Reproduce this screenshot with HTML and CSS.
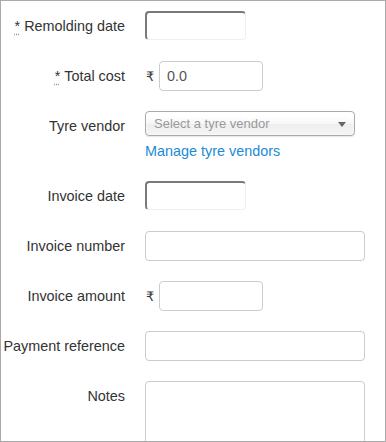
FILE: index.html
```html
<!DOCTYPE html>
<html lang="en">
<head>
  <meta charset="UTF-8">
  <meta name="viewport" content="width=device-width, initial-scale=1.0">
  <title>Tyre Remolding</title>
  <link rel="stylesheet" href="styles.css">
</head>
<body>

  <!-- Remolding form -->
  <form class="remold-form">

    <div class="form-row">
      <label class="form-label"><abbr title="required">*</abbr> Remolding date</label>
      <div class="form-field">
        <input type="text" class="date-input">
      </div>
    </div>

    <div class="form-row">
      <label class="form-label"><abbr title="required">*</abbr> Total cost</label>
      <div class="form-field money">
        <span class="currency">₹</span>
        <input type="text" class="text-input short" value="0.0">
      </div>
    </div>

    <div class="form-row">
      <label class="form-label">Tyre vendor</label>
      <div class="form-field stacked">
        <div class="select-box">
          <span class="placeholder">Select a tyre vendor</span>
          <span class="arrow"></span>
        </div>
        <a href="#" class="manage-link">Manage tyre vendors</a>
      </div>
    </div>

    <div class="form-row">
      <label class="form-label">Invoice date</label>
      <div class="form-field">
        <input type="text" class="date-input">
      </div>
    </div>

    <div class="form-row">
      <label class="form-label">Invoice number</label>
      <div class="form-field">
        <input type="text" class="text-input">
      </div>
    </div>

    <div class="form-row">
      <label class="form-label">Invoice amount</label>
      <div class="form-field money">
        <span class="currency">₹</span>
        <input type="text" class="text-input short">
      </div>
    </div>

    <div class="form-row">
      <label class="form-label">Payment reference</label>
      <div class="form-field">
        <input type="text" class="text-input">
      </div>
    </div>

    <div class="form-row last">
      <label class="form-label">Notes</label>
      <div class="form-field">
        <textarea class="notes"></textarea>
      </div>
    </div>

  </form>

</body>
</html>
```

FILE: styles.css
```css
/* General styling */
html {
  overflow: hidden;
}

body {
  margin: 0;
  height: 442px;
  box-sizing: border-box;
  border: 1px solid #aaa;
  overflow: hidden;
  background: #fff;
  font-family: "Liberation Sans", Arial, sans-serif;
  font-size: 14.4px;
  color: #333;
}

/* Form layout */
.remold-form {
  padding-top: 10px;
}

.form-row {
  display: flex;
  align-items: flex-start;
  margin-bottom: 20px;
}

.form-row.last {
  margin-bottom: 0;
}

.form-label {
  width: 124px;
  flex-shrink: 0;
  text-align: right;
  line-height: 30px;
  margin-right: 20px;
}

.form-label abbr {
  text-decoration: underline dotted;
  text-decoration-color: #999;
  text-underline-offset: 3px;
  cursor: help;
}

.form-field {
  display: flex;
  align-items: center;
}

.form-field.stacked {
  flex-direction: column;
  align-items: flex-start;
}

/* Inputs */
.text-input {
  width: 220px;
  height: 30px;
  box-sizing: border-box;
  border: 1px solid #ccc;
  border-radius: 4px;
  padding: 0 7px;
  font: inherit;
  color: #555;
  margin: 0;
}

.text-input.short {
  width: 104px;
}

.date-input {
  width: 101px;
  height: 29px;
  box-sizing: border-box;
  border-style: solid;
  border-width: 2px 1px 1px 2px;
  border-color: #7a7a7a #f0f0f0 #f0f0f0 #7a7a7a;
  border-radius: 4px;
  margin: 0;
  background: #fff;
}

.currency {
  width: 13px;
  padding-left: 1px;
  font-family: "DejaVu Sans", sans-serif;
  font-size: 13px;
}

/* Vendor select */
.select-box {
  position: relative;
  width: 210px;
  height: 25px;
  box-sizing: border-box;
  border: 1px solid #aaa;
  border-radius: 4px;
  background: linear-gradient(#fff 20%, #f6f6f6 50%, #eee 52%, #f4f4f4);
  box-shadow: 0 0 3px #fff inset, 0 1px 1px rgba(0, 0, 0, 0.1);
  padding-left: 8px;
  line-height: 23px;
  font-size: 13px;
  color: #999;
}

.select-box .arrow {
  position: absolute;
  right: 8px;
  top: 10px;
  border-left: 4px solid transparent;
  border-right: 4px solid transparent;
  border-top: 5px solid #666;
}

.manage-link {
  margin-top: 5px;
  line-height: 20px;
  color: #1a8bd6;
  text-decoration: none;
}

/* Notes */
.notes {
  width: 220px;
  height: 70px;
  box-sizing: border-box;
  border: 1px solid #ccc;
  border-radius: 4px;
  margin: 0;
  resize: none;
  vertical-align: top;
}
```
